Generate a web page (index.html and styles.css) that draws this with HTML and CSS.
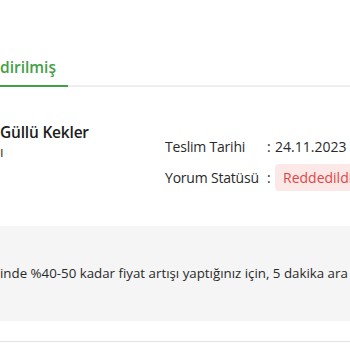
FILE: index.html
```html
<!DOCTYPE html>
<html lang="tr">
<head>
  <meta charset="UTF-8" />
  <meta name="viewport" content="width=device-width, initial-scale=1.0"/>
  <title>Değerlendirilmiş Siparişler</title>
  <link rel="stylesheet" href="styles.css">
</head>
<body>
  <div class="page">
    <div class="tabs">
      <div class="tab active">dirilmiş</div>
    </div>

    <div class="order">
      <div class="order-info">
        <div class="shop-name">Güllü Kekler</div>
        <div class="shop-sub">ı</div>
      </div>
      <div class="order-meta">
        <div class="meta-row">
          <span class="meta-label">Teslim Tarihi</span>
          <span class="meta-sep">:</span>
          <span class="meta-value">24.11.2023</span>
        </div>
        <div class="meta-row">
          <span class="meta-label">Yorum Statüsü</span>
          <span class="meta-sep">:</span>
          <span class="badge rejected">Reddedildi</span>
        </div>
      </div>
    </div>

    <div class="comment">
      inde %40-50 kadar fiyat artışı yaptığınız için, 5 dakika ara
    </div>

    <div class="divider"></div>
  </div>
</body>
</html>
```

FILE: styles.css
```css
* {
  box-sizing: border-box;
}

body {
  margin: 0;
  background: #fff;
  font-family: 'Open Sans', 'Noto Sans', sans-serif;
  color: #222;
  overflow: hidden;
}

.page {
  width: 350px;
  height: 350px;
  overflow: hidden;
}

.tabs {
  padding-top: 56px;
  border-bottom: 2px solid #eeeeee;
  display: flex;
}

.tab {
  font-size: 15.5px;
  line-height: 22px;
  font-weight: 600;
  padding-bottom: 7px;
  width: 68px;
}

.tab.active {
  color: #43a047;
  border-bottom: 2px solid #43a047;
  margin-bottom: -2px;
}

.order {
  display: flex;
  padding-top: 34px;
  height: 139px;
}

.order-info {
  width: 165px;
  flex-shrink: 0;
}

.shop-name {
  font-size: 15.5px;
  line-height: 22px;
  font-weight: 600;
  color: #1c1c1c;
  letter-spacing: -0.2px;
}

.shop-sub {
  font-size: 14px;
  line-height: 18px;
  color: #333;
}

.order-meta {
  display: flex;
  flex-direction: column;
  gap: 4px;
  padding-top: 12px;
  font-size: 14px;
  color: #2a2a2a;
}

.meta-row {
  display: flex;
  align-items: center;
  height: 27px;
  white-space: nowrap;
}

.meta-label {
  width: 102px;
  flex-shrink: 0;
  letter-spacing: -0.2px;
}

.meta-sep {
  width: 8px;
  flex-shrink: 0;
}

.badge {
  padding: 3px 8px;
  border-radius: 4px;
  line-height: 21px;
}

.badge.rejected {
  background: #fde8e8;
  color: #e04646;
}

.comment {
  background: #f5f5f5;
  height: 95px;
  padding: 37px 0 0;
  font-size: 13.3px;
  line-height: 20px;
  color: #2a2a2a;
  white-space: nowrap;
}

.divider {
  margin-top: 20px;
  height: 1px;
  background: #e3e3e3;
}
```
